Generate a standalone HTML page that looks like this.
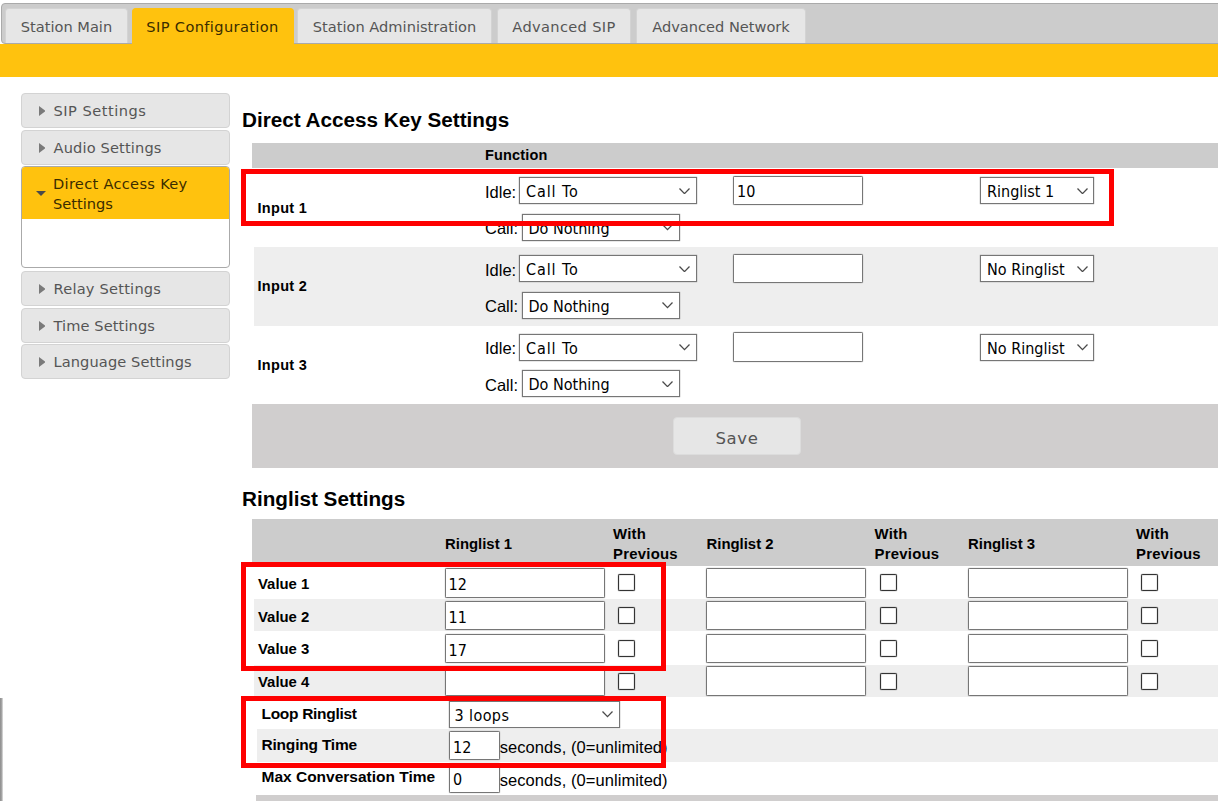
<!DOCTYPE html>
<html lang="en">
<head>
<meta charset="utf-8">
<title>SIP Configuration</title>
<style>
html,body{margin:0;padding:0;background:#fff;}
body{width:1218px;height:801px;position:relative;overflow:hidden;font-family:"Liberation Sans",sans-serif;color:#000;}
.abs{position:absolute;}
/* header tabs */
#tabhead{position:absolute;left:1px;top:3px;width:1230px;height:41px;background:#ccc;border:1px solid #aaa;border-radius:4px;box-sizing:border-box;}
#yellow{position:absolute;left:0;top:44px;width:1218px;height:33px;background:#ffc20e;}
.tab{position:absolute;top:8px;height:35px;box-sizing:border-box;border:1px solid #d3d3d3;border-bottom:none;border-radius:4px 4px 0 0;background:#e6e6e6;color:#555;font-family:"DejaVu Sans","Liberation Sans",sans-serif;font-size:14.6px;line-height:36px;text-align:center;white-space:nowrap;}
.tab.on{background:#ffc20e;border-color:#ffc20e;color:#3a2c00;height:37px;}
/* sidebar */
.side{position:absolute;left:21px;width:209px;box-sizing:border-box;border:1px solid #d3d3d3;border-radius:4px;background:#e6e6e6;color:#555;font-family:"DejaVu Sans","Liberation Sans",sans-serif;font-size:14.6px;height:35px;line-height:34px;padding-left:31.5px;white-space:nowrap;}
.side svg{position:absolute;left:16.5px;top:12.3px;}
h2{position:absolute;margin:0;left:242px;font-size:20.7px;font-weight:bold;line-height:24px;white-space:nowrap;}

/* tables */
.bar{position:absolute;background:#ccc;}
.row{position:absolute;}
.alt{background:#eee;}
.lbl{position:absolute;font-weight:bold;font-size:14.5px;line-height:16px;white-space:nowrap;}
.txt{position:absolute;font-size:16.5px;line-height:18px;white-space:nowrap;}
.sel{position:absolute;box-sizing:border-box;border:1px solid #767676;background:#fff;font-family:"DejaVu Sans Condensed","DejaVu Sans","Liberation Sans",sans-serif;font-size:16px;line-height:27px;padding-left:6px;white-space:nowrap;overflow:hidden;height:27px;box-shadow:0 0 1px #767676;}
.sel svg{position:absolute;right:5.5px;top:9.5px;}
.inp{position:absolute;box-sizing:border-box;border:1px solid #767676;background:#fff;font-family:"DejaVu Sans Condensed","DejaVu Sans","Liberation Sans",sans-serif;font-size:16px;white-space:nowrap;overflow:hidden;padding-left:3px;border-radius:1.5px;box-shadow:0 0 1px #767676;}
.cb{position:absolute;box-sizing:border-box;width:17px;height:17px;border:1px solid #333;background:#fff;border-radius:1.5px;box-shadow:0 0 1px #333, inset 0 0 1px #333;}
.red{position:absolute;box-sizing:border-box;border:5px solid #fe0000;pointer-events:none;}
.btn{position:absolute;box-sizing:border-box;border:1px solid #d9d9d9;border-radius:4px;background:#e6e6e6;color:#555;font-family:"DejaVu Sans","Liberation Sans",sans-serif;font-size:15.5px;text-align:center;}
</style>
</head>
<body>
<div id="tabhead"></div>
<div id="yellow"></div>
<div class="tab" style="left:5px;width:123px;">Station Main</div>
<div class="tab on" style="left:131.5px;width:162px;letter-spacing:0.37px;">SIP Configuration</div>
<div class="tab" style="left:297px;width:195px;">Station Administration</div>
<div class="tab" style="left:497px;width:134px;letter-spacing:0.35px;">Advanced SIP</div>
<div class="tab" style="left:636px;width:170px;">Advanced Network</div>

<div class="side" style="top:93px;letter-spacing:0.5px;"><svg width="6.5" height="10" viewBox="0 0 6.5 10"><path d="M0 0 L6.5 5 L0 10 Z" fill="#7a7a7a"/></svg>SIP Settings</div>
<div class="side" style="top:129.5px;letter-spacing:0.15px;"><svg width="6.5" height="10" viewBox="0 0 6.5 10"><path d="M0 0 L6.5 5 L0 10 Z" fill="#7a7a7a"/></svg>Audio Settings</div>
<div id="active" style="position:absolute;left:21px;top:166px;width:209px;height:102px;box-sizing:border-box;border:1px solid #aaa;border-radius:4px;background:#fff;overflow:hidden;">
  <div style="background:#ffc20e;height:52px;color:#3a2c00;font-family:'DejaVu Sans','Liberation Sans',sans-serif;font-size:14.6px;line-height:20px;padding:7px 0 0 32px;box-sizing:border-box;position:relative;">
    <span style="position:absolute;left:14px;top:23.5px;width:0;height:0;border-top:5.5px solid #4a4a4a;border-left:5px solid transparent;border-right:5px solid transparent;"></span>
    <span style="letter-spacing:0.3px;margin-left:-1px">Direct Access Key</span><br><span style="margin-left:-1px">Settings</span></div>
</div>
<div class="side" style="top:270.5px;letter-spacing:0.22px;"><svg width="6.5" height="10" viewBox="0 0 6.5 10"><path d="M0 0 L6.5 5 L0 10 Z" fill="#7a7a7a"/></svg>Relay Settings</div>
<div class="side" style="top:307.5px;letter-spacing:0.1px;"><svg width="6.5" height="10" viewBox="0 0 6.5 10"><path d="M0 0 L6.5 5 L0 10 Z" fill="#7a7a7a"/></svg>Time Settings</div>
<div class="side" style="top:344px;letter-spacing:0.1px;"><svg width="6.5" height="10" viewBox="0 0 6.5 10"><path d="M0 0 L6.5 5 L0 10 Z" fill="#7a7a7a"/></svg>Language Settings</div>

<h2 style="top:108px;">Direct Access Key Settings</h2>
<h2 style="top:486.7px;">Ringlist Settings</h2>

<div class="bar" style="left:252px;top:143px;width:966px;height:25px;"></div>
<div class="lbl" style="left:485px;top:147px;letter-spacing:0.15px;">Function</div>
<div class="lbl" style="left:257.5px;top:200.0px;letter-spacing:0.3px;">Input 1</div>
<div class="txt" style="left:485px;top:182.5px;">Idle:</div>
<div class="sel" style="left:519px;top:177.0px;width:177.5px;"><span style="letter-spacing:0.9px">Call To</span><svg width="11" height="6.5" viewBox="0 0 11 6.5"><path d="M0.5 0.5 L5.5 5.6 L10.5 0.5" fill="none" stroke="#4a4a4a" stroke-width="1.3"/></svg></div>
<div class="txt" style="left:485px;top:219.0px;">Call:</div>
<div class="sel" style="left:521.5px;top:213.5px;width:158px;">Do Nothing<svg width="11" height="6.5" viewBox="0 0 11 6.5"><path d="M0.5 0.5 L5.5 5.6 L10.5 0.5" fill="none" stroke="#4a4a4a" stroke-width="1.3"/></svg></div>
<div class="inp" style="left:733px;top:175.5px;width:129.5px;height:29.5px;line-height:30.5px;">10</div>
<div class="sel" style="left:980px;top:177.0px;width:114px;">Ringlist 1<svg width="11" height="6.5" viewBox="0 0 11 6.5"><path d="M0.5 0.5 L5.5 5.6 L10.5 0.5" fill="none" stroke="#4a4a4a" stroke-width="1.3"/></svg></div>
<div class="row alt" style="left:254px;top:247px;width:964px;height:78.5px;"></div>
<div class="lbl" style="left:257.5px;top:278.3px;letter-spacing:0.3px;">Input 2</div>
<div class="txt" style="left:485px;top:260.8px;">Idle:</div>
<div class="sel" style="left:519px;top:255.3px;width:177.5px;"><span style="letter-spacing:0.9px">Call To</span><svg width="11" height="6.5" viewBox="0 0 11 6.5"><path d="M0.5 0.5 L5.5 5.6 L10.5 0.5" fill="none" stroke="#4a4a4a" stroke-width="1.3"/></svg></div>
<div class="txt" style="left:485px;top:297.3px;">Call:</div>
<div class="sel" style="left:521.5px;top:291.8px;width:158px;">Do Nothing<svg width="11" height="6.5" viewBox="0 0 11 6.5"><path d="M0.5 0.5 L5.5 5.6 L10.5 0.5" fill="none" stroke="#4a4a4a" stroke-width="1.3"/></svg></div>
<div class="inp" style="left:733px;top:253.8px;width:129.5px;height:29.5px;line-height:30.5px;"></div>
<div class="sel" style="left:980px;top:255.3px;width:114px;">No Ringlist<svg width="11" height="6.5" viewBox="0 0 11 6.5"><path d="M0.5 0.5 L5.5 5.6 L10.5 0.5" fill="none" stroke="#4a4a4a" stroke-width="1.3"/></svg></div>
<div class="lbl" style="left:257.5px;top:356.8px;letter-spacing:0.3px;">Input 3</div>
<div class="txt" style="left:485px;top:339.3px;">Idle:</div>
<div class="sel" style="left:519px;top:333.8px;width:177.5px;"><span style="letter-spacing:0.9px">Call To</span><svg width="11" height="6.5" viewBox="0 0 11 6.5"><path d="M0.5 0.5 L5.5 5.6 L10.5 0.5" fill="none" stroke="#4a4a4a" stroke-width="1.3"/></svg></div>
<div class="txt" style="left:485px;top:375.8px;">Call:</div>
<div class="sel" style="left:521.5px;top:370.3px;width:158px;">Do Nothing<svg width="11" height="6.5" viewBox="0 0 11 6.5"><path d="M0.5 0.5 L5.5 5.6 L10.5 0.5" fill="none" stroke="#4a4a4a" stroke-width="1.3"/></svg></div>
<div class="inp" style="left:733px;top:332.3px;width:129.5px;height:29.5px;line-height:30.5px;"></div>
<div class="sel" style="left:980px;top:333.8px;width:114px;">No Ringlist<svg width="11" height="6.5" viewBox="0 0 11 6.5"><path d="M0.5 0.5 L5.5 5.6 L10.5 0.5" fill="none" stroke="#4a4a4a" stroke-width="1.3"/></svg></div>
<div class="bar" style="left:252px;top:404px;width:966px;height:64px;background:#d0cece;"></div>
<div class="btn" style="left:673px;top:417px;width:128px;height:38px;line-height:41px;font-size:16.5px;letter-spacing:0.6px;border-color:#dcdcdc;">Save</div>
<div class="bar" style="left:252px;top:519px;width:966px;height:47px;"></div>
<div class="lbl" style="left:445.0px;top:535.6px;font-size:14.9px;">Ringlist 1</div>
<div class="lbl" style="left:613.0px;top:523.5px;line-height:20.8px;font-size:14.9px;letter-spacing:0.25px;">With<br>Previous</div>
<div class="lbl" style="left:706.5px;top:535.6px;font-size:14.9px;">Ringlist 2</div>
<div class="lbl" style="left:874.5px;top:523.5px;line-height:20.8px;font-size:14.9px;letter-spacing:0.25px;">With<br>Previous</div>
<div class="lbl" style="left:968.0px;top:535.6px;font-size:14.9px;">Ringlist 3</div>
<div class="lbl" style="left:1136.0px;top:523.5px;line-height:20.8px;font-size:14.9px;letter-spacing:0.25px;">With<br>Previous</div>
<div class="lbl" style="left:258px;top:575.7px;font-size:14.9px;">Value 1</div>
<div class="inp" style="left:444.5px;top:568.0px;width:160px;height:29.5px;line-height:31.5px;">12</div>
<div class="cb" style="left:618.0px;top:574.2px;"></div>
<div class="inp" style="left:706.0px;top:568.0px;width:160px;height:29.5px;line-height:31.5px;"></div>
<div class="cb" style="left:879.5px;top:574.2px;"></div>
<div class="inp" style="left:967.5px;top:568.0px;width:160px;height:29.5px;line-height:31.5px;"></div>
<div class="cb" style="left:1141.0px;top:574.2px;"></div>
<div class="row alt" style="left:254px;top:599.2px;width:964px;height:32.2px;"></div>
<div class="lbl" style="left:258px;top:608.5px;font-size:14.9px;">Value 2</div>
<div class="inp" style="left:444.5px;top:600.8px;width:160px;height:29.5px;line-height:31.5px;">11</div>
<div class="cb" style="left:618.0px;top:607.0px;"></div>
<div class="inp" style="left:706.0px;top:600.8px;width:160px;height:29.5px;line-height:31.5px;"></div>
<div class="cb" style="left:879.5px;top:607.0px;"></div>
<div class="inp" style="left:967.5px;top:600.8px;width:160px;height:29.5px;line-height:31.5px;"></div>
<div class="cb" style="left:1141.0px;top:607.0px;"></div>
<div class="lbl" style="left:258px;top:641.2px;font-size:14.9px;">Value 3</div>
<div class="inp" style="left:444.5px;top:633.5px;width:160px;height:29.5px;line-height:31.5px;">17</div>
<div class="cb" style="left:618.0px;top:639.7px;"></div>
<div class="inp" style="left:706.0px;top:633.5px;width:160px;height:29.5px;line-height:31.5px;"></div>
<div class="cb" style="left:879.5px;top:639.7px;"></div>
<div class="inp" style="left:967.5px;top:633.5px;width:160px;height:29.5px;line-height:31.5px;"></div>
<div class="cb" style="left:1141.0px;top:639.7px;"></div>
<div class="row alt" style="left:254px;top:664.8px;width:964px;height:32.2px;"></div>
<div class="lbl" style="left:258px;top:674.0px;font-size:14.9px;">Value 4</div>
<div class="inp" style="left:444.5px;top:666.2px;width:160px;height:29.5px;line-height:31.5px;"></div>
<div class="cb" style="left:618.0px;top:672.5px;"></div>
<div class="inp" style="left:706.0px;top:666.2px;width:160px;height:29.5px;line-height:31.5px;"></div>
<div class="cb" style="left:879.5px;top:672.5px;"></div>
<div class="inp" style="left:967.5px;top:666.2px;width:160px;height:29.5px;line-height:31.5px;"></div>
<div class="cb" style="left:1141.0px;top:672.5px;"></div>
<div class="lbl" style="left:261.5px;top:705.8px;font-size:15.5px;letter-spacing:-0.3px;">Loop Ringlist</div>
<div class="sel" style="left:449px;top:700.5px;width:170.5px;"><span style="letter-spacing:0.4px;margin-left:-1.5px">3 loops</span><svg width="11" height="6.5" viewBox="0 0 11 6.5"><path d="M0.5 0.5 L5.5 5.6 L10.5 0.5" fill="none" stroke="#4a4a4a" stroke-width="1.3"/></svg></div>
<div class="row alt" style="left:257px;top:729px;width:961px;height:32.5px;"></div>
<div class="lbl" style="left:261.5px;top:736.5px;font-size:15.5px;letter-spacing:-0.2px;">Ringing Time</div>
<div class="inp" style="left:449px;top:730.5px;width:51px;height:29px;line-height:31px;">12</div>
<div class="txt" style="left:499.7px;top:738px;letter-spacing:0.07px;">seconds, (0=unlimited)</div>
<div class="lbl" style="left:261.5px;top:769px;font-size:15.5px;">Max Conversation Time</div>
<div class="inp" style="left:449px;top:763px;width:51px;height:29.5px;line-height:31px;">0</div>
<div class="txt" style="left:499.7px;top:770.5px;letter-spacing:0.07px;">seconds, (0=unlimited)</div>
<div class="bar" style="left:256px;top:794.5px;width:962px;height:10px;background:#d0cece;"></div>
<div class="red" style="left:241px;top:169px;width:873px;height:57px;"></div>
<div class="red" style="left:241px;top:562px;width:425px;height:109px;"></div>
<div class="red" style="left:241px;top:696.2px;width:425px;height:71.8px;"></div>
<div style="position:absolute;left:0;top:698px;width:3px;height:103px;background:linear-gradient(to right,#8c8c8c,#a8a8a8 60%,#e8e8e8);"></div>
</body>
</html>
